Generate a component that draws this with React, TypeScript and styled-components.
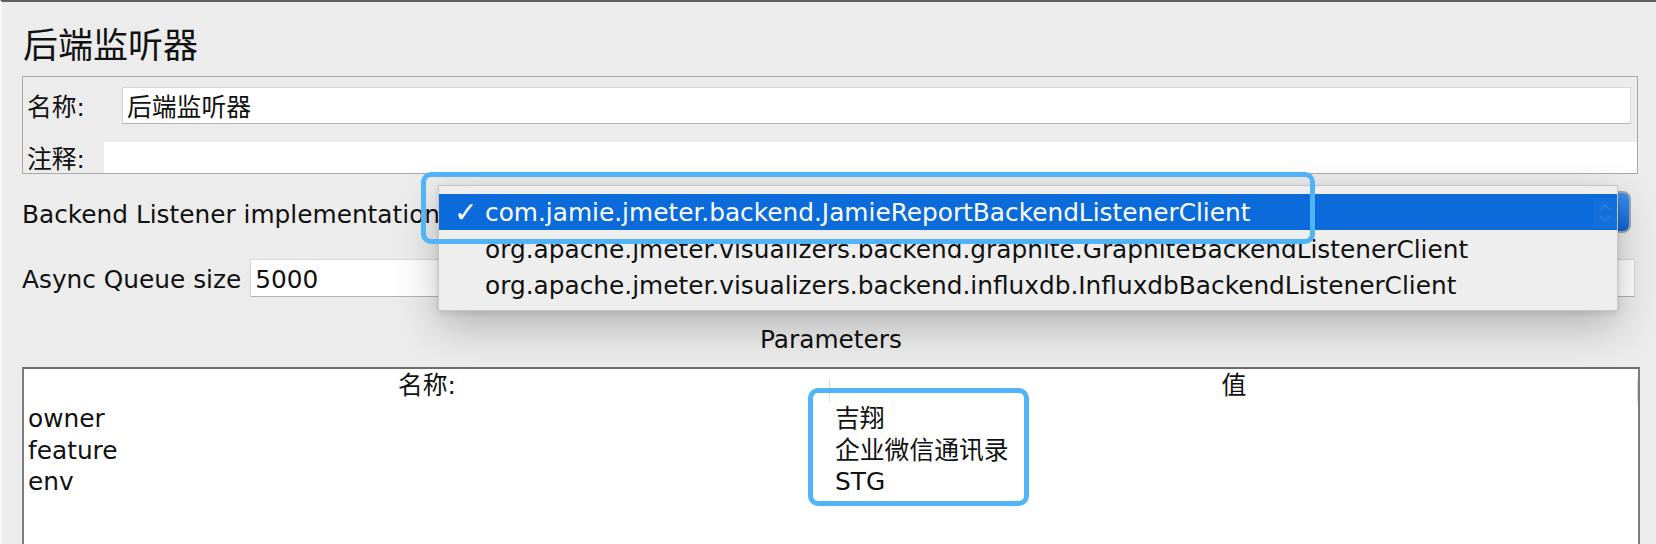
import React from "react";
import styled, { createGlobalStyle } from "styled-components";

const GlobalStyle = createGlobalStyle`
  html, body { margin: 0; padding: 0; background: #ececec; }
  body {
    font-family: "DejaVu Sans", "Noto Sans CJK SC", sans-serif;
    color: #111;
    overflow: hidden;
  }
  * { box-sizing: border-box; }
`;

const Page = styled.div`
  position: relative;
  width: 1656px;
  height: 544px;
  overflow: hidden;
  background: #ececec;
  border-top: 2px solid #5f5f5f;
  border-left: 2px solid #f7f7f7;
  padding: 0 16px 0 20px;
  display: flex;
  flex-direction: column;
  font-size: 24.8px;
`;

const TitleRow = styled.div`
  height: 74px;
  flex-shrink: 0;
  display: flex;
  align-items: center;
  padding: 13px 0 0 1px;
  font-size: 35px;
  line-height: 40px;
`;

const NameBox = styled.div`
  height: 98px;
  flex-shrink: 0;
  margin-right: 2px;
  border: 1px solid #a9a9a9;
  display: flex;
  flex-direction: column;
  padding: 10px 0 0 4px;
`;

const FieldRow = styled.div<{ $h: number; $top?: number }>`
  height: ${(p) => p.$h}px;
  flex-shrink: 0;
  margin-top: ${(p) => p.$top ?? 0}px;
  display: flex;
  align-items: center;
`;

const Label = styled.span<{ $w?: number; $drop?: number }>`
  flex-shrink: 0;
  width: ${(p) => (p.$w ? `${p.$w}px` : "auto")};
  padding-top: ${(p) => p.$drop ?? 4}px;
  white-space: nowrap;
  line-height: 30px;
`;

const TextInput = styled.div<{ $right?: number; $left?: number; $plain?: boolean }>`
  flex: 1;
  align-self: stretch;
  margin-left: ${(p) => p.$left ?? 0}px;
  margin-right: ${(p) => p.$right ?? 0}px;
  background: #fff;
  border: ${(p) => (p.$plain ? "none" : "1px solid #d6d6d6")};
  border-bottom-color: ${(p) => (p.$plain ? "transparent" : "#b3b3b3")};
  display: flex;
  align-items: center;
  padding: 4px 0 0 4px;
  white-space: nowrap;
  line-height: 30px;
`;

const Combo = styled.div`
  flex: 1;
  align-self: stretch;
  margin: 0 9px 0 4px;
  border: 2px solid #a3a8ae;
  border-radius: 8px;
  background: linear-gradient(#3d8ff0, #0f66d8);
`;

const ParamTitle = styled.div`
  height: 70px;
  flex-shrink: 0;
  display: flex;
  justify-content: center;
  padding-top: 28px;
  line-height: 30px;
`;

const Table = styled.div`
  height: 200px;
  flex-shrink: 0;
  background: #fff;
  border-top: 2px solid #6d6d6d;
  border-left: 2px solid #7d7d7d;
  border-right: 2px solid #7d7d7d;
  display: grid;
  grid-template-columns: 806px 1fr;
  grid-auto-rows: 31.5px;
  grid-template-rows: 34px;
  align-content: start;
`;

const HeadCell = styled.div`
  position: relative;
  display: flex;
  align-items: center;
  justify-content: center;
  line-height: 30px;
  &::after {
    content: "";
    position: absolute;
    right: 0;
    top: 10px;
    bottom: 1px;
    width: 1px;
    background: #dcdcdc;
  }
`;

const Cell = styled.div<{ $pad: number }>`
  padding-left: ${(p) => p.$pad}px;
  line-height: 31.5px;
  white-space: nowrap;
`;

const Popup = styled.div`
  position: absolute;
  left: 436px;
  top: 183px;
  width: 1180px;
  background: #eeeeee;
  border: 1px solid #c6c6c6;
  box-shadow: 0 16px 40px rgba(0, 0, 0, 0.24), 0 2px 6px rgba(0, 0, 0, 0.1);
  padding: 8px 0;
  z-index: 2;
`;

const Option = styled.div<{ $selected?: boolean }>`
  height: 36px;
  display: flex;
  align-items: center;
  padding-top: ${(p) => (p.$selected ? 1 : 4)}px;
  background: ${(p) => (p.$selected ? "#0b6bda" : "transparent")};
  color: ${(p) => (p.$selected ? "#fff" : "#111")};
  white-space: nowrap;
  line-height: 30px;
`;

const CheckCell = styled.span`
  width: 46px;
  flex-shrink: 0;
  padding-left: 15px;
  font-size: 28px;
`;

const GhostArrow = styled.span`
  margin-left: auto;
  width: 24px;
  height: 30px;
  display: flex;
  align-items: center;
  justify-content: center;
  background: rgba(255, 255, 255, 0.03);
`;

const Highlight = styled.div<{ $x: number; $y: number; $w: number; $h: number }>`
  position: absolute;
  left: ${(p) => p.$x}px;
  top: ${(p) => p.$y}px;
  width: ${(p) => p.$w}px;
  height: ${(p) => p.$h}px;
  border: 5px solid #52b4f8;
  border-radius: 10px;
  z-index: 3;
  pointer-events: none;
`;

const options = [
  "com.jamie.jmeter.backend.JamieReportBackendListenerClient",
  "org.apache.jmeter.visualizers.backend.graphite.GraphiteBackendListenerClient",
  "org.apache.jmeter.visualizers.backend.influxdb.InfluxdbBackendListenerClient",
];

const params: [string, string][] = [
  ["owner", "吉翔"],
  ["feature", "企业微信通讯录"],
  ["env", "STG"],
];

export default function App() {
  return (
    <>
      <GlobalStyle />
      <Page>
        <TitleRow>后端监听器</TitleRow>
        <NameBox>
          <FieldRow $h={37}>
            <Label $w={95}>名称:</Label>
            <TextInput $right={6}>后端监听器</TextInput>
          </FieldRow>
          <FieldRow $h={31} $top={18}>
            <Label $w={77}>注释:</Label>
            <TextInput $plain />
          </FieldRow>
        </NameBox>
        <FieldRow $h={42} $top={17}>
          <Label $drop={6}>Backend Listener implementation</Label>
          <Combo />
        </FieldRow>
        <FieldRow $h={38} $top={26}>
          <Label>Async Queue size</Label>
          <TextInput $left={9} $right={5}>5000</TextInput>
        </FieldRow>
        <ParamTitle>Parameters</ParamTitle>
        <Table>
          <HeadCell>名称:</HeadCell>
          <HeadCell>值</HeadCell>
          {params.map(([k, v]) => (
            <React.Fragment key={k}>
              <Cell $pad={4}>{k}</Cell>
              <Cell $pad={5}>{v}</Cell>
            </React.Fragment>
          ))}
        </Table>

        <Popup>
          {options.map((o, i) => (
            <Option key={o} $selected={i === 0}>
              <CheckCell>{i === 0 ? "✓" : ""}</CheckCell>
              {o}
              {i === 0 && (
                <GhostArrow>
                  <svg width="16" height="24" viewBox="0 0 16 24" fill="none">
                    <path d="M3 9 L8 4 L13 9 M3 15 L8 20 L13 15" stroke="rgba(255,255,255,0.1)" strokeWidth="2" />
                  </svg>
                </GhostArrow>
              )}
            </Option>
          ))}
        </Popup>

        <Highlight $x={419} $y={170} $w={894} $h={72} />
        <Highlight $x={806} $y={386} $w={221} $h={118} />
      </Page>
    </>
  );
}
